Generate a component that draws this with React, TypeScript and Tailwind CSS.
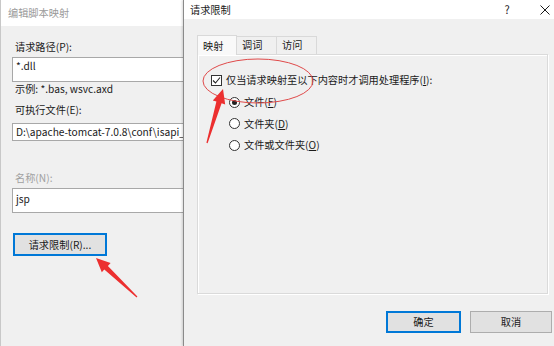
import React from "react";

const font = "font-['Noto_Sans_CJK_SC','Noto_Sans',sans-serif]";

function TextBox({ value, className }: { value: string; className: string }) {
  return (
    <div className={`w-[180px] bg-white border border-[#a8a8a8] pl-[3px] text-[#1a1a1a] leading-[14px] ${className}`}>
      {value}
    </div>
  );
}

function Radio({ label, checked }: { label: React.ReactNode; checked?: boolean }) {
  return (
    <div className="flex items-center h-[14px]">
      <span className="w-[11px] h-[11px] rounded-full border border-[#333] bg-white flex items-center justify-center shrink-0">
        {checked && <span className="w-[5px] h-[5px] rounded-full bg-[#222]" />}
      </span>
      <span className="ml-[4px]">{label}</span>
    </div>
  );
}

export default function App() {
  return (
    <div className={`relative w-[554px] h-[346px] overflow-hidden flex bg-[#f0f0f0] text-[10.2px] text-[#1a1a1a] ${font}`}>
      {/* Background dialog: script mapping */}
      <div className="w-[183px] h-full shrink-0 flex flex-col overflow-hidden border-l border-[#c8c8c8]">
        <div className="h-[26px] bg-white flex items-center pl-[7px] text-[#9a9a9a] shrink-0">
          编辑脚本映射
        </div>
        <div className="flex flex-col pl-[11px]">
          <div className="mt-[14px] leading-[14px] pl-[3px]">请求路径(P):</div>
          <TextBox value="*.dll" className="mt-[3px] h-[25px] pt-[1px]" />
          <div className="leading-[14px] pl-[3px]">示例: *.bas, wsvc.axd</div>
          <div className="mt-[7px] leading-[14px] pl-[3px]">可执行文件(E):</div>
          <TextBox value="D:\apache-tomcat-7.0.8\conf\isapi_" className="mt-[6px] h-[18px] pt-[1px] whitespace-nowrap overflow-hidden" />
          <div className="mt-[30px] leading-[14px] pl-[3px] text-[#a0a0a0]">名称(N):</div>
          <TextBox value="jsp" className="mt-[3px] h-[25px] pt-[3px]" />
          <button className="mt-[20px] ml-[1px] w-[94px] h-[23px] bg-[#e1e1e1] border-2 border-[#0078d7] flex items-center justify-center leading-[14px]">
            请求限制(R)...
          </button>
        </div>
      </div>

      {/* Foreground dialog: request restrictions */}
      <div className="flex-1 h-full flex flex-col border-l border-[#8a8a8a] shadow-[-1px_0_2px_rgba(0,0,0,0.15)]">
        <div className="h-[19px] bg-white flex items-center shrink-0 pl-[6px]">
          <span className="flex-1">请求限制</span>
          <span className="w-[10px] text-center text-[11px]">?</span>
          <span className="ml-[28px] mr-[4px] w-[10px] h-[10px] flex items-center justify-center">
            <svg width="10" height="10" viewBox="0 0 10 10">
              <path d="M0.5 0.5 L9.5 9.5 M9.5 0.5 L0.5 9.5" stroke="#1a1a1a" strokeWidth="1" />
            </svg>
          </span>
        </div>

        <div className="flex flex-col pl-[13px] pt-[16px]">
          <div className="flex items-end h-[19px]">
            <div className="relative z-10 w-[40px] h-[20px] -mb-px bg-[#f9f9f9] border border-b-0 border-[#d9d9d9] pl-[5px] pt-[3px] leading-[14px]">
              映射
            </div>
            <div className="w-[40px] h-[18px] border border-b-0 border-l-0 border-[#d9d9d9] pl-[5px] pt-[1px] leading-[14px]">
              调词
            </div>
            <div className="w-[40px] h-[18px] border border-b-0 border-l-0 border-[#d9d9d9] pl-[5px] pt-[1px] leading-[14px]">
              访问
            </div>
          </div>
          <div className="w-[351px] h-[240px] border border-[#dadada] shadow-[inset_1px_1px_0_#ffffff,1px_1px_0_#ffffff] pl-[13px] pt-[18px] flex flex-col">
            <div className="flex items-center h-[14px]">
              <span className="w-[11px] h-[11px] border border-[#333] bg-white flex items-center justify-center shrink-0">
                <svg width="9" height="9" viewBox="0 0 9 9">
                  <path d="M1 4.5 L3.5 7 L8 1.5" fill="none" stroke="#222" strokeWidth="1.1" />
                </svg>
              </span>
              <span className="ml-[4px]">仅当请求映射至以下内容时才调用处理程序(<u>I</u>):</span>
            </div>
            <div className="flex flex-col gap-[7.5px] pl-[18px] mt-[8px]">
              <Radio checked label={<>文件(<u>F</u>)</>} />
              <Radio label={<>文件夹(<u>D</u>)</>} />
              <Radio label={<>文件或文件夹(<u>O</u>)</>} />
            </div>
          </div>
          <div className="flex justify-end gap-[9px] mt-[17px] pr-[2px]">
            <button className="w-[75px] h-[22px] bg-[#e1e1e1] border-2 border-[#0078d7] leading-[14px]">确定</button>
            <button className="w-[82px] h-[22px] bg-[#e1e1e1] border border-[#adadad] leading-[14px]">取消</button>
          </div>
        </div>
      </div>

      {/* Red annotations */}
      <svg className="absolute inset-0 pointer-events-none" width="554" height="346" viewBox="0 0 554 346">
        <ellipse cx="258" cy="81" rx="55" ry="22" fill="none" stroke="#e04a4a" strokeWidth="1" />
        <polygon
          fill="#ec2f2f"
          points="223,89 225.2,104.6 221.6,103.3 207.6,143.2 206.4,142.8 216.4,101.6 212.8,100.4"
        />
        <polygon
          fill="#ec2f2f"
          points="96,258 110.6,263.1 107.9,265.9 137.4,296.6 136.6,297.4 104.3,269.5 101.8,272.3"
        />
      </svg>
    </div>
  );
}
